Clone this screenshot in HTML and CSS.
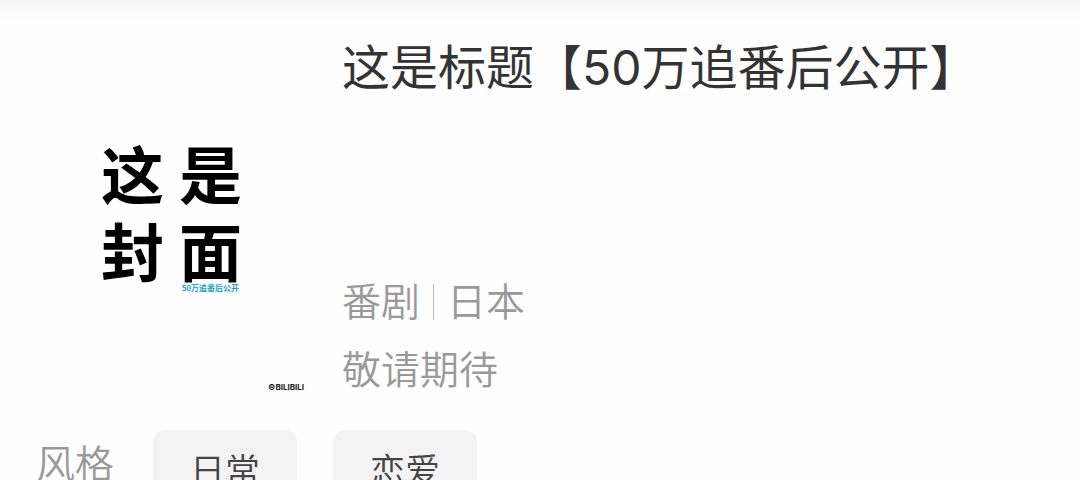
FILE: index.html
```html
<!DOCTYPE html>
<html lang="zh-CN">
<head>
    <meta charset="UTF-8">
    <meta name="viewport" content="width=device-width, initial-scale=1.0">
    <title>这是标题【50万追番后公开】</title>
    <link rel="stylesheet" href="styles.css">
</head>
<body>
    <main class="page">
        <!-- Cover and info -->
        <section class="media">
            <div class="cover">
                <div class="cover-title">
                    <span>这</span><span>是</span>
                    <span>封</span><span>面</span>
                </div>
                <p class="cover-note">50万追番后公开</p>
                <p class="cover-copy">©BILIBILI</p>
            </div>
            <div class="info">
                <h1 class="title">这是标题【50万追番后公开】</h1>
                <div class="meta">
                    <p class="type"><span>番剧</span><span class="divider"></span><span>日本</span></p>
                    <p class="status">敬请期待</p>
                </div>
            </div>
        </section>

        <!-- Style tags -->
        <section class="styles">
            <span class="styles-label">风格</span>
            <button type="button" class="tag">日常</button>
            <button type="button" class="tag">恋爱</button>
        </section>
    </main>
</body>
</html>
```

FILE: styles.css
```css
/* Page */
body {
    margin: 0;
    background: #fefefe;
    font-family: Inter, "Noto Sans CJK SC", sans-serif;
    color: #333;
}

h1,
p {
    margin: 0;
}

.page {
    padding: 32px 36px 0;
    background: linear-gradient(#f6f6f6, #fefefe 20px);
}

/* Cover and info */
.media {
    display: flex;
    gap: 36px;
}

.cover {
    display: flex;
    flex-direction: column;
    width: 270px;
    flex-shrink: 0;
    box-sizing: border-box;
    padding: 115px 2px 12px 0;
}

.cover-title {
    display: grid;
    grid-template-columns: 63px 63px;
    gap: 19px 15px;
    margin-left: 65px;
    color: #000;
    font-size: 63px;
    font-weight: 700;
    line-height: 58px;
}

.cover-note {
    margin-left: 146px;
    color: #2392b0;
    font-family: "Noto Sans CJK SC", sans-serif;
    font-size: 8px;
    font-weight: 500;
    line-height: 12px;
    text-shadow: 0 0 2px #a8ecf8;
}

.cover-copy {
    margin-top: auto;
    align-self: flex-end;
    color: #222;
    font-size: 8px;
    font-weight: 700;
    line-height: 10px;
}

.info {
    display: flex;
    flex-direction: column;
    flex: 1;
    justify-content: space-between;
    gap: 164px;
}

.title {
    font-size: 48px;
    font-weight: 400;
    line-height: 72px;
}

.meta {
    color: #999;
    font-size: 39px;
    font-weight: 350;
    line-height: 68px;
}

.type {
    display: flex;
    align-items: center;
}

.divider {
    width: 1px;
    height: 36px;
    margin: 0 13px;
    background: #bbb;
}

/* Style tags */
.styles {
    display: flex;
    align-items: flex-start;
    gap: 36px;
    margin-top: 26px;
}

.styles-label {
    width: 81px;
    color: #999;
    font-size: 39px;
    font-weight: 350;
    line-height: 68px;
}

.tag {
    width: 144px;
    height: 76px;
    padding: 0;
    border: 0;
    border-radius: 12px;
    background: #f3f3f3;
    color: #444;
    font-family: inherit;
    font-size: 35px;
    font-weight: 350;
}
```
